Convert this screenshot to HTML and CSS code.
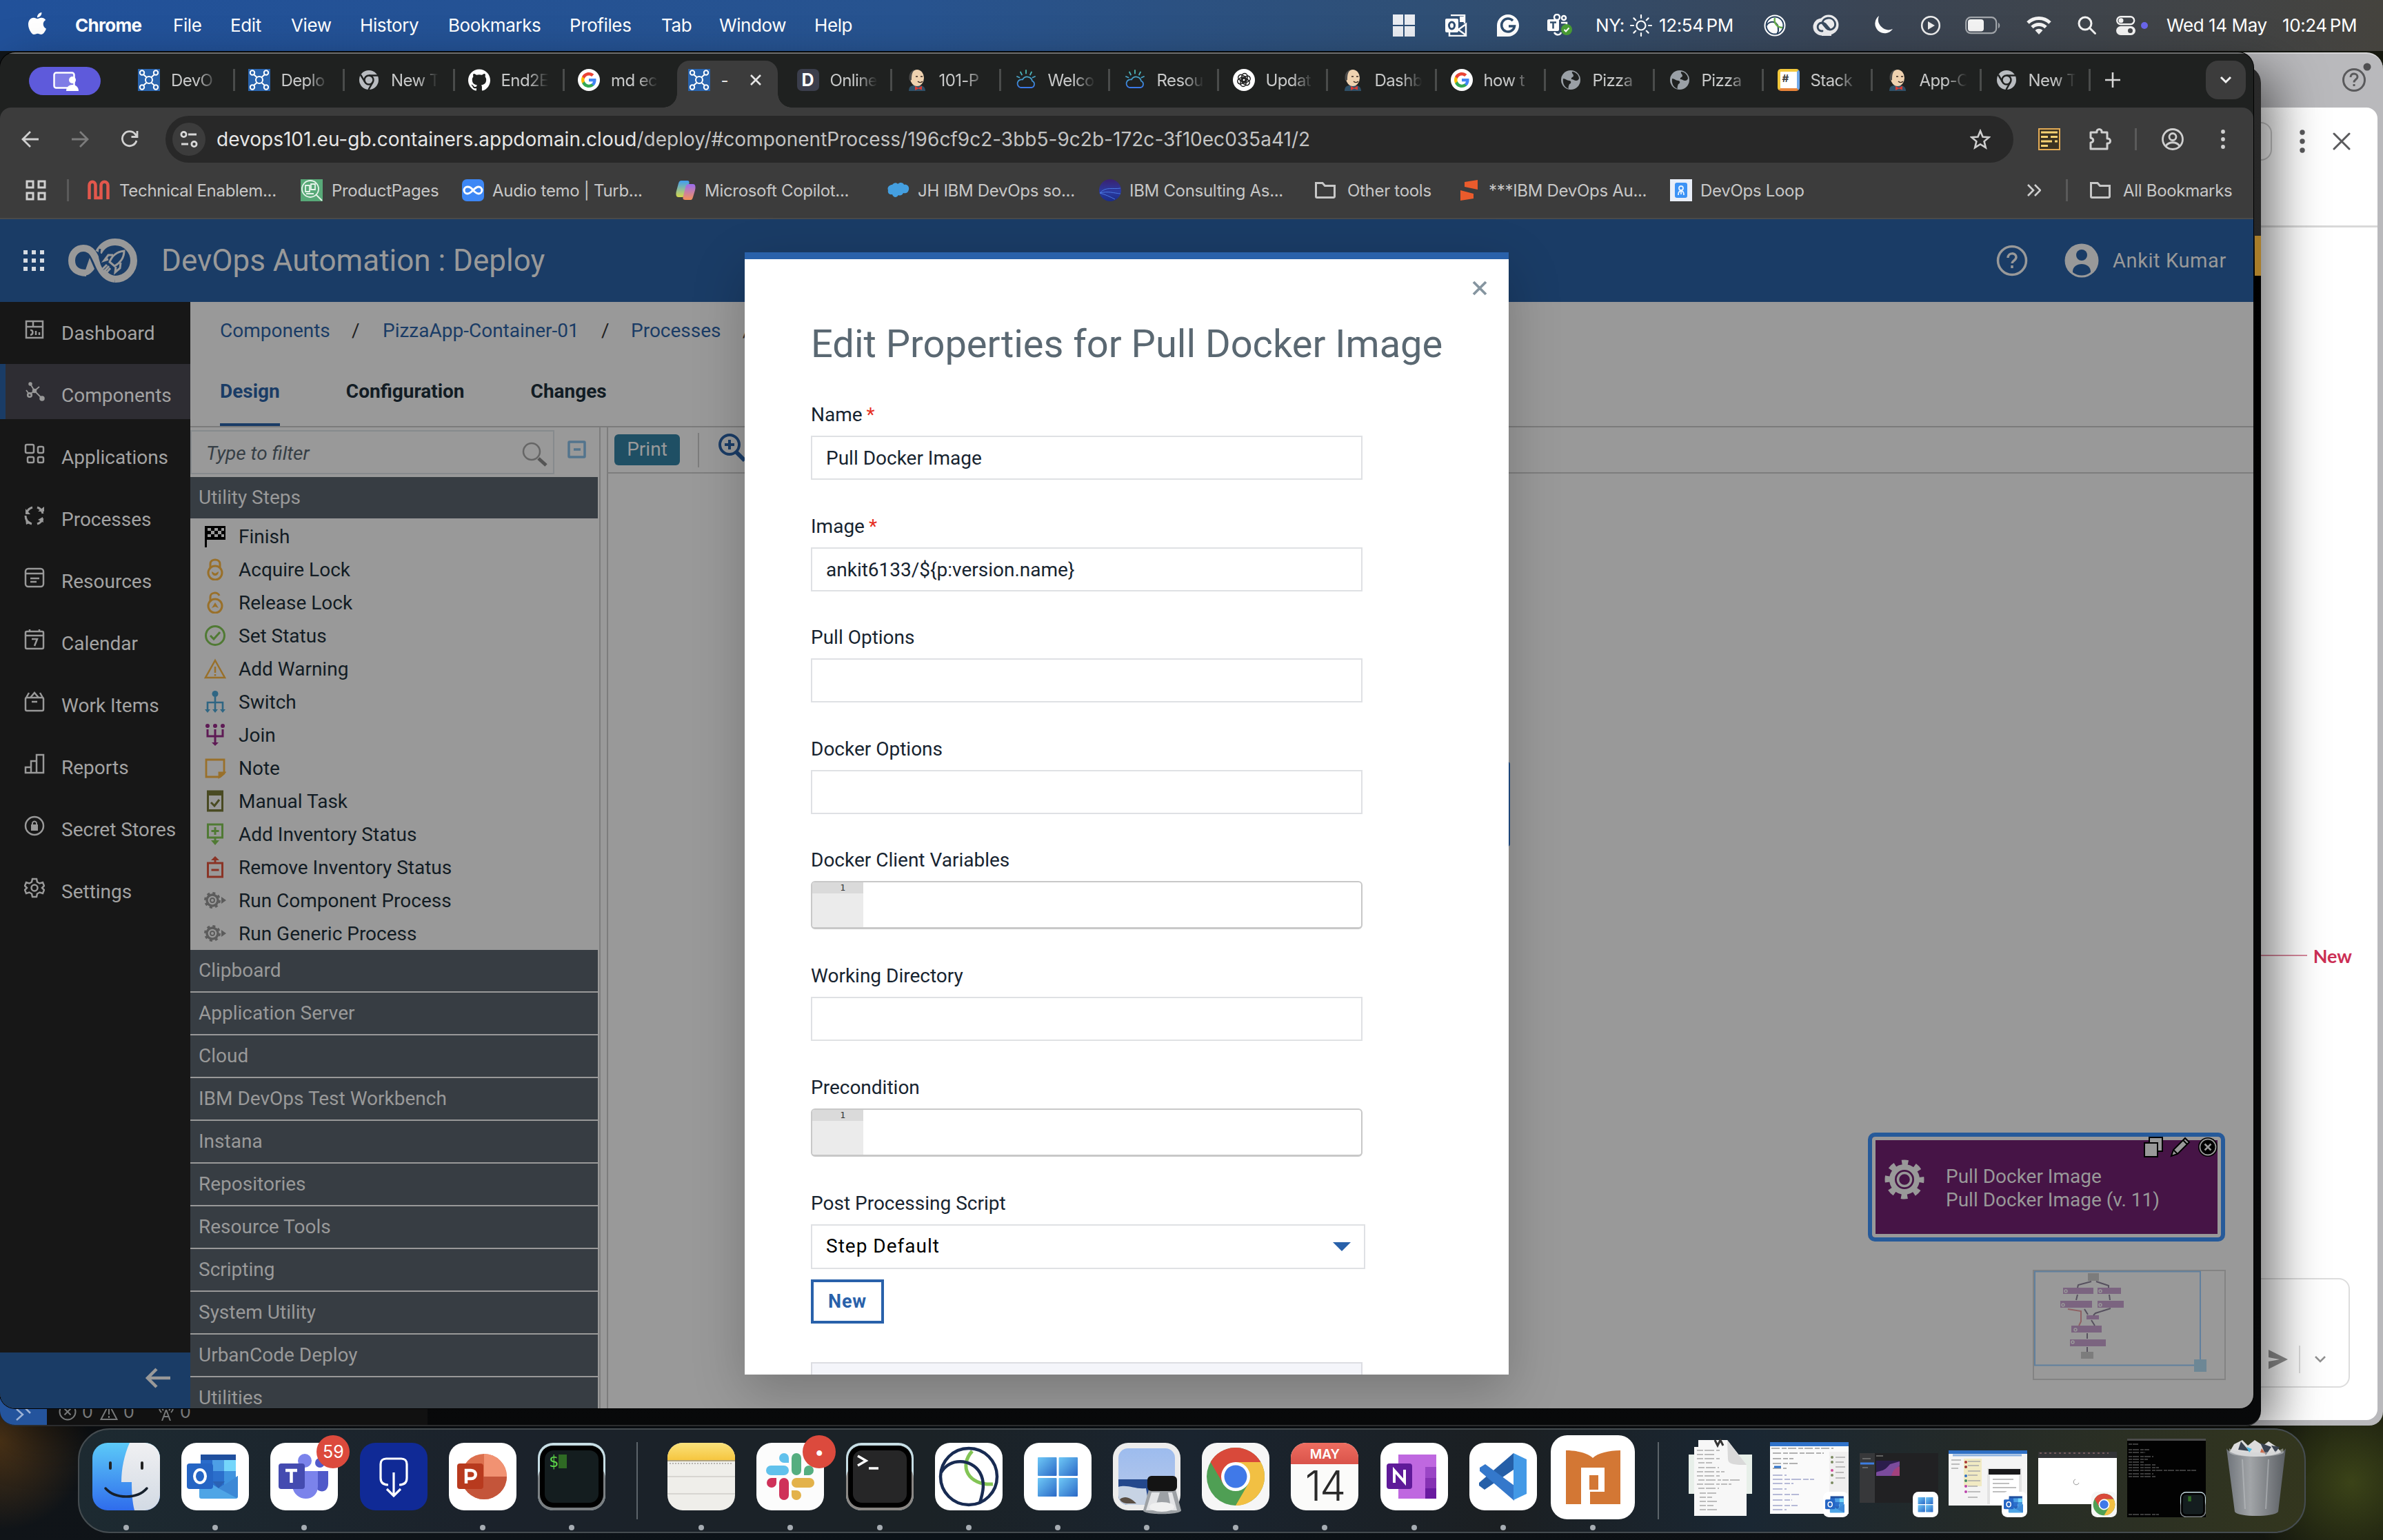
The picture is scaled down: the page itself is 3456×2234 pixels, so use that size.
FILE: index.html
```html
<!DOCTYPE html>
<html lang="en">
<head>
<meta charset="utf-8">
<title>DevOps Automation : Deploy</title>
<link rel="stylesheet" href="styles.css">
</head>
<body>
<svg class="defs" width="0" height="0" aria-hidden="true">
<defs>
<linearGradient id="gFinder" x1="0" y1="0" x2="0" y2="1"><stop offset="0" stop-color="#5ccaf8"/><stop offset="1" stop-color="#2f6cec"/></linearGradient>
<linearGradient id="gGrey" x1="0" y1="0" x2="0" y2="1"><stop offset="0" stop-color="#f0f0f2"/><stop offset="1" stop-color="#d2dae4"/></linearGradient>
<linearGradient id="gWin" x1="0" y1="0" x2="1" y2="1"><stop offset="0" stop-color="#6fc9f7"/><stop offset="1" stop-color="#2a68c6"/></linearGradient>
<linearGradient id="gSky" x1="0" y1="0" x2="0" y2="1"><stop offset="0" stop-color="#9dbcee"/><stop offset="1" stop-color="#b9c9ea"/></linearGradient>
<linearGradient id="gRed" x1="0" y1="0" x2="0" y2="1"><stop offset="0" stop-color="#ee6d60"/><stop offset="1" stop-color="#d9534a"/></linearGradient>
<linearGradient id="gYel" x1="0" y1="0" x2="0" y2="1"><stop offset="0" stop-color="#fae27c"/><stop offset="1" stop-color="#f6c63f"/></linearGradient>
<linearGradient id="gBin" x1="0" y1="0" x2="1" y2="0"><stop offset="0" stop-color="#6f747a"/><stop offset=".4" stop-color="#a2a5a8"/><stop offset="1" stop-color="#5a5e63"/></linearGradient>
<linearGradient id="gCloud" x1="0" y1="0" x2="0" y2="1"><stop offset="0" stop-color="#4fc0b0"/><stop offset="1" stop-color="#3a78e8"/></linearGradient>
<linearGradient id="gCop1" x1="0" y1="0" x2="0" y2="1"><stop offset="0" stop-color="#3f9df2"/><stop offset="1" stop-color="#d5d84a"/></linearGradient>
<linearGradient id="gCop2" x1="0" y1="0" x2="0" y2="1"><stop offset="0" stop-color="#9a6cf0"/><stop offset="1" stop-color="#f5925a"/></linearGradient>
<linearGradient id="gIbm" x1="0" y1="0" x2="0" y2="1"><stop offset="0" stop-color="#3a2170"/><stop offset=".55" stop-color="#2b3aa0"/><stop offset="1" stop-color="#1b2c86"/></linearGradient>
</defs>
<symbol id="apple" viewBox="0 0 24 24"><path d="M12.152 6.896c-.948 0-2.415-1.078-3.96-1.04-2.04.027-3.91 1.183-4.961 3.014-2.117 3.675-.546 9.103 1.519 12.09 1.013 1.454 2.208 3.09 3.792 3.039 1.52-.065 2.09-.987 3.935-.987 1.831 0 2.35.987 3.96.948 1.637-.026 2.676-1.48 3.676-2.948 1.156-1.688 1.636-3.325 1.662-3.415-.039-.013-3.182-1.221-3.22-4.857-.026-3.04 2.48-4.494 2.597-4.559-1.429-2.09-3.623-2.324-4.39-2.376-2-.156-3.675 1.09-4.61 1.09zM15.53 3.83c.843-1.012 1.4-2.427 1.245-3.83-1.207.052-2.662.805-3.532 1.818-.78.896-1.454 2.338-1.273 3.714 1.338.104 2.715-.688 3.559-1.701" fill="#fff"/></symbol>
<symbol id="deploy" viewBox="0 0 32 32"><path fill="#2a64ad" d="M0 0h32v32H0z"/><g fill="none" stroke="#fff" stroke-width="2"><circle cx="16" cy="16" r="5"/><circle cx="6" cy="5.500" r="3.200"/><circle cx="26" cy="5.500" r="3.200"/><circle cx="6" cy="26.500" r="3.200"/><circle cx="26" cy="26.500" r="3.200"/><path d="M8 8l5 4.500M24 8l-5 4.500M8 24l5-4.500M24 24l-5-4.500"/></g></symbol>
<symbol id="chromegrey" viewBox="0 0 32 32"><circle cx="16" cy="16" r="14" fill="#b9bcc0"/><circle cx="16" cy="16" r="6.500" fill="none" stroke="#1f2120" stroke-width="2.500"/><path d="M16 9.500h13M10.400 19.200L4 8.500M21.600 19.200L15.500 30" stroke="#1f2120" stroke-width="2.500"/></symbol>
<symbol id="github" viewBox="0 0 24 24"><path fill="#fff" d="M12 .297c-6.630 0-12 5.373-12 12 0 5.303 3.438 9.800 8.205 11.385.6.113.82-.258.82-.577 0-.285-.01-1.040-.015-2.040-3.338.724-4.042-1.610-4.042-1.610C4.422 18.070 3.633 17.700 3.633 17.700c-1.087-.744.084-.729.084-.729 1.205.084 1.838 1.236 1.838 1.236 1.070 1.835 2.809 1.305 3.495.998.108-.776.417-1.305.76-1.605-2.665-.3-5.466-1.332-5.466-5.930 0-1.310.465-2.380 1.235-3.220-.135-.303-.54-1.523.105-3.176 0 0 1.005-.322 3.300 1.230.96-.267 1.980-.399 3-.405 1.020.006 2.040.138 3 .405 2.280-1.552 3.285-1.230 3.285-1.230.645 1.653.24 2.873.12 3.176.765.84 1.230 1.910 1.230 3.220 0 4.610-2.805 5.625-5.475 5.920.42.36.81 1.096.81 2.220 0 1.606-.015 2.896-.015 3.286 0 .315.21.69.825.57C20.565 22.092 24 17.592 24 12.297c0-6.627-5.373-12-12-12"/></symbol>
<symbol id="google" viewBox="-4 -4 32 32"><circle cx="12" cy="12" r="16" fill="#fff"/><path fill="#4285F4" d="M22.560 12.250c0-.78-.07-1.530-.2-2.250H12v4.260h5.920c-.26 1.370-1.040 2.530-2.210 3.310v2.770h3.570c2.080-1.920 3.280-4.740 3.280-8.090z"/><path fill="#34A853" d="M12 23c2.970 0 5.460-.98 7.280-2.660l-3.570-2.770c-.98.66-2.230 1.060-3.710 1.060-2.860 0-5.290-1.930-6.160-4.530H2.180v2.840C3.990 20.530 7.700 23 12 23z"/><path fill="#FBBC05" d="M5.840 14.090c-.22-.66-.35-1.360-.35-2.090s.13-1.430.35-2.090V7.070H2.180C1.430 8.550 1 10.220 1 12s.43 3.450 1.180 4.930l2.850-2.220.81-.62z"/><path fill="#EA4335" d="M12 5.380c1.620 0 3.060.56 4.210 1.640l3.150-3.150C17.450 2.090 14.970 1 12 1 7.700 1 3.990 3.470 2.180 7.070l3.660 2.840c.87-2.600 3.300-4.530 6.160-4.530z"/></symbol>
<symbol id="jenkins" viewBox="0 0 32 32"><path d="M4 32c0-6 3-8 8-8h8c5 0 8 3 8 8z" fill="#2f5068"/><ellipse cx="16" cy="13" rx="10" ry="12" fill="#efd2b0"/><path d="M5 17C3 8 7 2 13 1c-4 3-5 7-5 15z" fill="#4a4a4a"/><path d="M17 18c2 2 5 2 7 0M14 11h3M21 11h3" stroke="#3a2a20" stroke-width="1.600" fill="none"/><path d="M13 25l5 2.500 5-3v6l-5-2-5 2.500z" fill="#d83b34"/></symbol>
<symbol id="cloudicon" viewBox="0 0 32 32"><g fill="none" stroke="url(#gCloud)" stroke-width="1.800" stroke-linecap="round"><path d="M8 27h16a5 5 0 0 0 1-9.500 7.500 7.500 0 0 0-14-2 5.800 5.800 0 0 0-3 11.500zM16 2v4.500M8 4.500l2 4M24 4.500l-2 4M3 11l3.500 1.500M29 11l-3.500 1.500"/></g></symbol>
<symbol id="openai" viewBox="0 0 32 32"><circle cx="16" cy="16" r="16" fill="#fff"/><g fill="none" stroke="#1c1c1c" stroke-width="1.500"><rect x="13" y="6.500" width="8" height="12" rx="4"/><rect x="13" y="6.500" width="8" height="12" rx="4" transform="rotate(60 16 16)"/><rect x="13" y="6.500" width="8" height="12" rx="4" transform="rotate(120 16 16)"/><rect x="13" y="6.500" width="8" height="12" rx="4" transform="rotate(180 16 16)"/><rect x="13" y="6.500" width="8" height="12" rx="4" transform="rotate(240 16 16)"/><rect x="13" y="6.500" width="8" height="12" rx="4" transform="rotate(300 16 16)"/></g></symbol>
<symbol id="globe" viewBox="0 0 32 32"><circle cx="16" cy="16" r="14" fill="#9aa0a6"/><path d="M5 14c4 0 5 3 9 3 3 0 3 4 0 5-1 3-2 5-1 7C7 27 4 21 5 14zM18 4c-1 3 2 3 2 6 0 2-4 2-3 5 3 0 4 2 7 2 2 0 3-1 4-3 0-5-5-10-10-10z" fill="#1f2120"/></symbol>
<symbol id="folder" viewBox="0 0 32 32"><path d="M2.500 6.500h9.500l3.500 4h14v15.500a1.500 1.500 0 0 1-1.500 1.500H4a1.500 1.500 0 0 1-1.500-1.500z" fill="none" stroke="#c7c7c7" stroke-width="3" transform="translate(0 -1)"/></symbol>
<symbol id="gearrun" viewBox="0 0 32 32"><g fill="none" stroke="#5c5c5c"><circle cx="12" cy="16" r="8" stroke-width="3.500"/><circle cx="12" cy="16" r="10.500" stroke-width="3" stroke-dasharray="4 4.250"/><circle cx="12" cy="16" r="3" stroke-width="2"/></g><path d="M25 11l7 5-7 5z" fill="#5c5c5c"/></symbol>
<symbol id="outlook" viewBox="0 0 98 98"><rect width="98" height="98" rx="22" fill="#fff"/><path d="M28 17h51v30H28z" fill="#1f4f9e"/><path d="M28 25h17v16H28z" fill="#2a6ccb"/><path d="M45 25h17v16H45z" fill="#4d9fe6"/><path d="M62 25h17v16H62z" fill="#74d6fb"/><path d="M28 41h34v28H28z" fill="#2b6fcc"/><path d="M62 41h17v22H62z" fill="#3f93df"/><path d="M26 48l28 18 28-18v30a3 3 0 0 1-3 3H29a3 3 0 0 1-3-3z" fill="#4ea5e6"/><path d="M45 56h18l-9 10z" fill="#2a62b4"/><path d="M54 66l28-18v30a3 3 0 0 1-2 2z" fill="#3c88d6"/><rect x="8" y="30" width="38" height="37" rx="4" fill="#2565c4"/><ellipse cx="27" cy="48.500" rx="8" ry="9.500" fill="none" stroke="#fff" stroke-width="4"/></symbol>
<symbol id="wintile" viewBox="0 0 98 98"><rect width="98" height="98" rx="22" fill="#fff"/><g fill="url(#gWin)"><rect x="20" y="21" width="27.500" height="27" rx="1"/><rect x="50.500" y="21" width="27.500" height="27" rx="1"/><rect x="20" y="51" width="27.500" height="27" rx="1"/><rect x="50.500" y="51" width="27.500" height="27" rx="1"/></g></symbol>
<symbol id="chromeapp" viewBox="0 0 98 98"><rect width="98" height="98" rx="22" fill="#f6f6f6"/><circle cx="49" cy="49" r="42" fill="#4f9f54"/><path d="M49 28h36.400A42 42 0 0 1 49 91l18-31z" fill="#f2c043"/><path d="M12.600 28A42 42 0 0 1 85.400 28H49L31 59.500z" fill="#d9493a"/><circle cx="49" cy="49" r="21" fill="#fff"/><circle cx="49" cy="49" r="16.500" fill="#4079e8"/></symbol>
<symbol id="termapp" viewBox="0 0 98 98"><rect width="98" height="98" rx="22" fill="#c6dde4"/><rect y="30" width="98" height="68" rx="22" fill="#7a7f82"/><rect x="3" y="4" width="92" height="90" rx="19" fill="#000"/><rect x="10" y="11" width="78" height="76" rx="13" fill="#141d1f"/><rect x="30" y="17" width="12" height="20" fill="#2f6a24"/></symbol>
</svg>

<header class="menubar">
  <svg class="apple"><use href="#apple"/></svg>
  <b>Chrome</b><span>File</span><span>Edit</span><span>View</span><span>History</span><span>Bookmarks</span><span>Profiles</span><span>Tab</span><span>Window</span><span>Help</span>
  <svg width="32" height="32" viewBox="0 0 32 32" fill="#e9ecf2"><path d="M0 0h15v15H0zM17 0h15v15H17zM0 17h15v15H0zM17 17h15v15H17z"/></svg>
  <svg width="32" height="32" viewBox="0 0 32 32"><path d="M8 1h20v12M6 26v5h24V14l-11 8 11 8M19 22l-5-3" fill="none" stroke="#fff" stroke-width="2.500"/><path d="M21 3v8h7V3z" fill="#fff"/><rect y="6" width="19" height="20" rx="2" fill="#fff"/><ellipse cx="9.500" cy="16" rx="4" ry="5" fill="none" stroke="#2f4d72" stroke-width="3"/></svg>
  <svg width="32" height="32" viewBox="0 0 32 32"><path d="M16 0a16 16 0 1 1 0 32H0V16A16 16 0 0 1 16 0z" fill="#fff"/><path d="M23 9a9.500 9.500 0 1 0 2.500 8H17" fill="none" stroke="#2f4d6e" stroke-width="3.500"/></svg>
  <svg width="36" height="34" viewBox="0 0 36 34"><rect y="8" width="17" height="17" rx="2" fill="#fff"/><path d="M4 12.500h9M8.500 12.500v9" stroke="#33506e" stroke-width="2.500"/><g fill="none" stroke="#fff" stroke-width="2.500"><circle cx="14" cy="5" r="4"/><circle cx="24" cy="6" r="3"/><path d="M20 13h8v5M10 27c3 5 9 4 10 0"/></g><circle cx="28" cy="23" r="8" fill="#4a9e35"/><path d="M24.500 23l2.500 2.500 4.500-5" stroke="#fff" stroke-width="2" fill="none"/></svg>
  <span>NY:</span>
  <svg width="32" height="32" viewBox="0 0 32 32" fill="none" stroke="#fff" stroke-width="2.200" stroke-linecap="round"><circle cx="16" cy="16" r="6.500"/><path d="M16 1v4M16 27v4M1 16h4M27 16h4M5.400 5.400l2.800 2.800M23.800 23.800l2.800 2.800M5.400 26.600l2.800-2.800M23.800 8.200l2.800-2.800"/></svg>
  <span>12:54<small></small>PM</span>
  <svg width="32" height="32" viewBox="0 0 32 32"><circle cx="16" cy="16" r="15.500" fill="#fff"/><g fill="none" stroke="#26405e" stroke-width="2"><circle cx="16" cy="16" r="12.500"/><path d="M4 16c4-8 18-8 17 8l-2 5"/></g><path d="M16 5c-2 8 4 14 11 14" fill="none" stroke="#6ab04c" stroke-width="2.500"/></svg>
  <svg width="38" height="32" viewBox="0 0 38 32"><circle cx="13" cy="18" r="12.500" fill="#ececee"/><circle cx="23" cy="15" r="14.500" fill="#ececee"/><path d="M13 28h14v3H13z" fill="#ececee"/><g fill="none" stroke="#394a5e" stroke-width="2.800" stroke-linecap="round"><path d="M14 24c-9 1-9-12-1-12 3 0 5 1 7 4l5 6M14 13c0-9 14-11 18-2 3 9-7 14-12 9l-5-6"/></g></svg>
  <svg width="30" height="30" viewBox="0 0 30 30"><path d="M9 1a14 14 0 1 0 20 19A15 15 0 0 1 9 1z" fill="#fff"/></svg>
  <svg width="30" height="30" viewBox="0 0 30 30"><circle cx="15" cy="15" r="12.800" fill="none" stroke="#ececec" stroke-width="2.600"/><path d="M11 9l10 6-10 6z" fill="#ececec"/></svg>
  <svg width="52" height="26" viewBox="0 0 52 26"><rect x="1.200" y="1.200" width="44" height="23" rx="7" fill="none" stroke="#a4a8ad" stroke-width="2.200"/><rect x="4" y="4" width="23" height="17.500" rx="4" fill="#f3f3f3"/><path d="M48 9c3 1 3 7 0 8z" fill="#a4a8ad"/></svg>
  <svg width="36" height="26" viewBox="0 0 36 26" fill="none" stroke="#f3f3f3" stroke-width="5"><path d="M2 9a23 23 0 0 1 32 0M8 15.500a14.500 14.500 0 0 1 20 0"/><path d="M18 26l-5.500-6a8 8 0 0 1 11 0z" fill="#f3f3f3" stroke="none"/></svg>
  <svg width="28" height="28" viewBox="0 0 28 28" fill="none" stroke="#f3f3f3" stroke-width="3"><circle cx="11" cy="11" r="9"/><path d="M17.500 17.500l8 8" stroke-linecap="round"/></svg>
  <svg width="28" height="28" viewBox="0 0 28 28"><rect x="1.200" y="1.200" width="25" height="11" rx="5.500" fill="none" stroke="#f3f3f3" stroke-width="2.400"/><circle cx="7" cy="6.700" r="3.500" fill="#f3f3f3"/><rect y="15" width="28" height="13" rx="6.500" fill="#f3f3f3"/><circle cx="20.500" cy="21.500" r="3.500" fill="#44464a"/></svg>
  <i class="statusdot"></i>
  <span>Wed 14 May</span><span>10:24<small></small>PM</span>
</header>

<section class="win-slack">
  <div class="slack-top"><svg width="44" height="44" viewBox="0 0 44 44"><circle cx="18" cy="26" r="15.500" fill="none" stroke="#5a5a5c" stroke-width="3"/><path d="M13 22c0-7 10-6 10-.5 0 4-5 3.500-5 8M18 32v3" fill="none" stroke="#5a5a5c" stroke-width="3"/><circle cx="37" cy="7" r="5.500" fill="#4f4f51"/></svg></div>
  <div class="slack-body">
    <div class="slack-bar"><i class="pillend"></i><svg width="10" height="34" viewBox="0 0 10 34" fill="#5a5a5c"><circle cx="5" cy="4" r="3.700"/><circle cx="5" cy="17" r="3.700"/><circle cx="5" cy="30" r="3.700"/></svg><svg width="26" height="26" viewBox="0 0 26 26" stroke="#5a5a5c" stroke-width="3" stroke-linecap="round"><path d="M2 2l22 22M24 2L2 24"/></svg></div>
    <div class="newline"><i></i><b>New</b></div>
    <div class="composer"><svg width="30" height="28" viewBox="0 0 30 28"><path d="M1 0l28 14L1 28V17l16-3L1 11z" fill="#919191"/></svg><i></i><svg width="18" height="12" viewBox="0 0 18 12" fill="none" stroke="#919191" stroke-width="2.500"><path d="M2 2l7 7 7-7"/></svg></div>
  </div>
</section>

<section class="win-code">
  <i class="code-accent"></i>
  <div class="status">
    <span class="remote"><svg width="26" height="28" viewBox="0 0 26 28" fill="none" stroke="#9db3d6" stroke-width="2.500"><path d="M3 10l9 8-9 8M23 0l-8 8 8 8"/></svg></span>
    <svg width="26" height="26" viewBox="0 0 26 26" fill="none" stroke="#77797a" stroke-width="2"><circle cx="13" cy="13" r="11.500"/><path d="M8.500 8.500l9 9M17.500 8.500l-9 9"/></svg><span>0</span>
    <svg width="26" height="26" viewBox="0 0 26 26" fill="none" stroke="#77797a" stroke-width="2"><path d="M13 2l11.500 22H1.500zM13 9v8M13 19v3"/></svg><span>0</span>
    <svg class="tower" width="24" height="26" viewBox="0 0 24 26" fill="none" stroke="#77797a" stroke-width="2"><path d="M12 10L6 26M12 10l6 16M8 20h8M5 2c-4 4-4 8 0 12M19 2c4 4 4 8 0 12M8 5c-2 2-2 4 0 6M16 5c2 2 2 4 0 6"/></svg><span>0</span>
  </div>
</section>

<main class="win-chrome">
  <div class="tabstrip">
    <span class="pill"><svg width="38" height="28" viewBox="0 0 38 28"><rect x="1.500" y="1.500" width="29" height="22" rx="3" fill="#7f7ce6" stroke="#fff" stroke-width="2.500"/><circle cx="28" cy="12" r="5" fill="#fff"/><path d="M19 28c0-12 18-12 18 0z" fill="#fff"/></svg></span>
    <div class="tabs-a">
      <div class="tab"><svg><use href="#deploy"/></svg><span>DevO</span></div>
      <div class="tab"><svg><use href="#deploy"/></svg><span>Deplo</span></div>
      <div class="tab"><svg><use href="#chromegrey"/></svg><span>New T</span></div>
      <div class="tab"><svg><use href="#github"/></svg><span>End2E</span></div>
      <div class="tab last"><svg><use href="#google"/></svg><span>md ec</span></div>
    </div>
    <div class="tab-active"><svg><use href="#deploy"/></svg><span>-</span><svg class="tx" viewBox="0 0 16 16" stroke="#e6e6e6" stroke-width="2.600"><path d="M1 1l14 14M15 1L1 15"/></svg></div>
    <div class="tabs-b">
      <div class="tab"><b class="fav-d">D</b><span>Online</span></div>
      <div class="tab"><svg><use href="#jenkins"/></svg><span>101-P</span></div>
      <div class="tab"><svg><use href="#cloudicon"/></svg><span>Welco</span></div>
      <div class="tab"><svg><use href="#cloudicon"/></svg><span>Resou</span></div>
      <div class="tab"><svg><use href="#openai"/></svg><span>Updat</span></div>
      <div class="tab"><svg><use href="#jenkins"/></svg><span>Dashb</span></div>
      <div class="tab"><svg><use href="#google"/></svg><span>how t</span></div>
      <div class="tab"><svg><use href="#globe"/></svg><span>Pizza</span></div>
      <div class="tab"><svg><use href="#globe"/></svg><span>Pizza</span></div>
      <div class="tab"><b class="fav-s">#</b><span>Stack</span></div>
      <div class="tab"><svg><use href="#jenkins"/></svg><span>App-C</span></div>
      <div class="tab"><svg><use href="#chromegrey"/></svg><span>New T</span></div>
    </div>
    <svg class="plus" width="22" height="22" viewBox="0 0 22 22" stroke="#d8d8d8" stroke-width="2.600"><path d="M11 0v22M0 11h22"/></svg>
    <span class="tabdrop"><svg width="18" height="12" viewBox="0 0 18 12" fill="none" stroke="#f0f0f0" stroke-width="3"><path d="M2 2l7 7 7-7"/></svg></span>
  </div>

  <div class="toolbar">
    <svg width="26" height="26" viewBox="0 0 26 26" fill="none" stroke="#d0d0d0" stroke-width="2.800"><path d="M25 13H3M13 2L2 13l11 11"/></svg>
    <svg width="26" height="26" viewBox="0 0 26 26" fill="none" stroke="#7c7c7c" stroke-width="2.800"><path d="M1 13h22M13 2l11 11-11 11"/></svg>
    <svg width="26" height="26" viewBox="0 0 26 26" fill="none" stroke="#d0d0d0" stroke-width="2.800"><path d="M23 15a10.500 10.500 0 1 1-2-9.500L24 9"/><path d="M24 1v8.500h-8.500"/></svg>
    <div class="omnibox">
      <span class="site"><svg width="26" height="24" viewBox="0 0 26 24" fill="none" stroke="#d8d8d8" stroke-width="2.800"><circle cx="5.500" cy="5" r="3.600"/><path d="M12 5h12M2 19h10"/><circle cx="20.500" cy="19" r="3.600"/></svg></span>
      <span class="url">devops101.eu-gb.containers.appdomain.cloud<em>/deploy/#componentProcess/196cf9c2-3bb5-9c2b-172c-3f10ec035a41/2</em></span>
      <svg width="30" height="30" viewBox="0 0 30 30" fill="none" stroke="#cfcfcf" stroke-width="2.600"><path d="M15 3l3.500 8.500 9 .7-6.900 5.900 2.200 9-7.800-4.900-7.800 4.900 2.200-9L2.500 12.200l9-.7z"/></svg>
    </div>
    <svg width="32" height="32" viewBox="0 0 32 32"><rect x="1" y="1" width="30" height="30" fill="#3a3222" stroke="#e3ab55" stroke-width="2"/><path d="M4 6h24M4 12.500h10M18 12.500h10M4 19h16M24 19h4M4 25.500h10" stroke="#f5d273" stroke-width="3"/></svg>
    <svg width="34" height="34" viewBox="0 0 34 34"><path d="M3 7h9c-1-6 8-6 7 0h8v9c6-1 6 8 0 7v8H3v-9c5-1 5-6 0-7z" fill="none" stroke="#cfcfcf" stroke-width="3" stroke-linejoin="round"/></svg>
    <i class="vsep"></i>
    <svg width="32" height="32" viewBox="0 0 32 32" fill="none" stroke="#cfcfcf" stroke-width="2.800"><circle cx="16" cy="16" r="14.500"/><circle cx="16" cy="12.500" r="5"/><path d="M6 26c4-7 16-7 20 0"/></svg>
    <svg width="6" height="28" viewBox="0 0 6 28" fill="#cfcfcf"><circle cx="3" cy="3" r="2.900"/><circle cx="3" cy="14" r="2.900"/><circle cx="3" cy="25" r="2.900"/></svg>
  </div>

  <nav class="bookmarks">
    <svg width="30" height="30" viewBox="0 0 30 30" fill="none" stroke="#cfcfcf" stroke-width="3"><path d="M2 2h9v9H2zM19 2h9v9h-9zM2 19h9v9H2zM19 19h9v9h-9z"/></svg>
    <i class="vsep"></i>
    <svg width="32" height="32" viewBox="0 0 32 32" fill="none" stroke="#e2574c" stroke-width="4.500"><path d="M2.500 29V9c0-7 9-7 9 0v18h8V9c0-7 10-7 10 0v20"/></svg><span>Technical Enablem...</span>
    <svg width="32" height="32" viewBox="0 0 32 32"><path fill="#58a978" d="M0 0h32v32H0z"/><circle cx="14" cy="14" r="12" fill="none" stroke="#e5f3ea" stroke-width="1.800"/><path d="M7 9h6v9H7zM15 7h6v8h-6zM8 21h11M22 22l9 9" fill="none" stroke="#e5f3ea" stroke-width="1.800"/></svg><span>ProductPages</span>
    <svg width="32" height="32" viewBox="0 0 32 32"><rect width="32" height="32" rx="7" fill="#3d87f5"/><path d="M16 16c-3-5-6-5-8-5a5 5 0 0 0 0 10c3 0 5-2 8-5s5-5 8-5a5 5 0 0 1 0 10c-3 0-5-2-8-5z" fill="none" stroke="#fff" stroke-width="3"/></svg><span>Audio temo | Turb...</span>
    <svg width="32" height="32" viewBox="0 0 32 32"><path d="M9 2h9c3 0 3 3 2 6l-4 14c-1 3-3 4-6 4H5c-4 0-4-5-3-9L5 6c1-3 2-4 4-4z" fill="url(#gCop1)"/><path d="M23 30h-8c-4 0-4-3-3-6l3-12c1-4 3-5 6-5h5c4 0 4 5 3 9l-3 10c-1 3-2 4-3 4z" fill="url(#gCop2)"/></svg><span>Microsoft Copilot...</span>
    <svg width="32" height="32" viewBox="0 0 32 32"><path d="M7 8c3-4 7-3 8-1 4-4 9-1 9 1 5-1 8 3 7 7-1 5-5 6-8 5-2 4-5 4-7 3-3 5-8 3-9-1-5 1-7-3-6-6C-1 12 3 8 7 8z" fill="#449fe0"/></svg><span>JH IBM DevOps so...</span>
    <svg width="32" height="32" viewBox="0 0 32 32"><circle cx="16" cy="16" r="16" fill="url(#gIbm)"/><path d="M1 20C10 10 20 15 31 13M1 20c12-3 20 0 30 1M1 20c8 2 16 6 22 9" stroke="#4a78e0" stroke-width="1" fill="none"/></svg><span>IBM Consulting As...</span>
    <svg width="32" height="32"><use href="#folder"/></svg><span>Other tools</span>
    <svg width="32" height="32" viewBox="0 0 32 32" fill="#ea5b2c"><path d="M7 4l19-3v14L7 11zM1 16l19 5v7L1 31z"/></svg><span>***IBM DevOps Au...</span>
    <svg width="32" height="32" viewBox="0 0 32 32"><path fill="#e9eef8" d="M0 0h32v32H0z"/><rect x="7" y="5" width="18" height="22" rx="3" fill="#3c92f5"/><path d="M12 23c0-8 8-8 8 0M16 10a3 3 0 1 1 0 6 3 3 0 0 1 0-6zM16 16v6" fill="none" stroke="#e9f3fe" stroke-width="1.800"/></svg><span>DevOps Loop</span>
    <svg width="20" height="18" viewBox="0 0 20 18" fill="none" stroke="#cfcfcf" stroke-width="2.600"><path d="M1 1l8 8-8 8M11 1l8 8-8 8"/></svg>
    <i class="vsep"></i>
    <svg width="32" height="32"><use href="#folder"/></svg><span>All Bookmarks</span>
  </nav>

  <div class="app">
    <div class="apphead">
      <svg width="30" height="30" viewBox="0 0 30 30" fill="#d6dbe2"><path d="M0 0h6v6H0zM12 0h6v6h-6zM24 0h6v6h-6zM0 12h6v6H0zM12 12h6v6h-6zM24 12h6v6h-6zM0 24h6v6H0zM12 24h6v6h-6zM24 24h6v6h-6z"/></svg>
      <svg class="logo" width="100" height="64" viewBox="0 0 100 64"><g fill="none" stroke="#999" stroke-width="10"><path d="M26 50C12 50 5 43 5 32s8-18 17-18c12 0 16 10 22 24 5 12 12 20 24 21"/><path d="M44 20C49 10 58 5 68 5a27 27 0 0 1 0 54"/></g><path d="M22 54l9-26 7 16c-4 6-9 10-16 10z" fill="#999"/><path d="M46 15c-2 8 0 20 6 30" stroke="#1a3c66" stroke-width="3" fill="none"/><g fill="none" stroke="#999" stroke-width="3"><path d="M60 34c3-8 10-15 21-16 0 10-6 18-14 22zM58 30l-6 2 6-8 7 0M69 41l-1 8 7-6 1-8M56 38l-8 8M61 43l-7 8M59 40l-8 9"/></g></svg>
      <h1>DevOps Automation : Deploy</h1>
      <svg width="46" height="46" viewBox="0 0 46 46" fill="none" stroke="#999" stroke-width="3.500"><circle cx="23" cy="23" r="20.500"/><path d="M17 19c0-8 12-8 12-1 0 5-6 5-6 9M23 30v4"/></svg>
      <svg width="50" height="50" viewBox="0 0 50 50"><circle cx="25" cy="25" r="24.500" fill="#999"/><circle cx="25" cy="17" r="8" fill="#1a3c66"/><path d="M12 42c-1-16 27-16 26 0-8 6-18 6-26 0z" fill="#1a3c66"/></svg>
      <span class="user">Ankit Kumar</span>
    </div>
    <div class="appbody">
      <aside class="side">
        <a><svg viewBox="0 0 30 30"><path d="M3 3h24v24H3zM3 11h24M13 3v8M9 16c4-1 5 6 0 7M17 17v6M22 19v4"/></svg><span>Dashboard</span></a>
        <a class="on"><svg viewBox="0 0 30 30"><path d="M15 14L9 4M15 14l7-6M15 14L8 19M15 14l10 10M3 13l3 4" stroke-width="1.800"/><circle cx="9" cy="4" r="1.500"/><circle cx="8" cy="20" r="2.800"/><circle cx="15" cy="14" r="2" fill="#999"/><circle cx="26" cy="25" r="2.500" fill="#999"/></svg><span>Components</span></a>
        <a><svg viewBox="0 0 30 30"><rect x="2" y="2" width="12" height="12" rx="2"/><rect x="20" y="5" width="8" height="9" rx="2"/><rect x="5" y="20" width="9" height="8" rx="2"/><rect x="20" y="20" width="8" height="8" rx="2"/></svg><span>Applications</span></a>
        <a><svg viewBox="0 0 30 30"><path d="M4 10a12 12 0 0 1 8-7M19 3a12 12 0 0 1 8 9M27 19a12 12 0 0 1-8 8M11 27a12 12 0 0 1-9-12" stroke-width="3"/><path d="M2 5v8h7zM20 9h9V2zM28 25l-1-8-7 4zM2 20l1 8 7-3z" fill="#999" stroke="none"/></svg><span>Processes</span></a>
        <a><svg viewBox="0 0 30 30"><rect x="2" y="2" width="26" height="26" rx="4"/><path d="M2 9h26M9 16h13M9 21h9"/></svg><span>Resources</span></a>
        <a><svg viewBox="0 0 30 30"><rect x="2" y="3" width="26" height="25" rx="2"/><path d="M2 9h26M8 0v4M22 0v4M11 14h8l-4 10"/></svg><span>Calendar</span></a>
        <a><svg viewBox="0 0 30 30"><rect x="2" y="9" width="26" height="19" rx="2"/><path d="M3 9l4-7M27 9l-4-7M9 9l6-7 6 7M11 15h8"/></svg><span>Work Items</span></a>
        <a><svg viewBox="0 0 30 30"><path d="M2 28v-8h8v8zM10 28V11h8v17zM18 28V2h10v26z"/></svg><span>Reports</span></a>
        <a><svg viewBox="0 0 30 30"><circle cx="15" cy="15" r="13"/><rect x="10" y="13" width="10" height="9" fill="#999" stroke="none"/><path d="M12 13c-1-6 7-6 6 0" stroke-width="2"/></svg><span>Secret Stores</span></a>
        <a><svg viewBox="0 0 30 30"><path d="M12 2h6l1 4.500 3.500 2 4.500-1.500 2 5-3 3 3 3-2 5-4.500-1.500-3.500 2-1 4.500h-6l-1-4.500-3.500-2L3 23l-2-5 3-3-3-3 2-5 4.500 1.500 3.500-2z"/><circle cx="15" cy="15" r="4.500"/></svg><span>Settings</span></a>
        <div class="sidefoot"><svg width="38" height="30" viewBox="0 0 38 30" fill="none" stroke="#999" stroke-width="4.500"><path d="M37 15H5M17 2L4 15l13 13"/></svg></div>
      </aside>
      <div class="content">
        <div class="crumbs"><a>Components</a><i>/</i><a>PizzaApp-Container-01</a><i>/</i><a>Processes</a><i>/</i></div>
        <div class="subtabs"><b class="on">Design</b><b>Configuration</b><b>Changes</b></div>
        <div class="work">
          <div class="palette">
            <div class="filter"><div class="fbox"><em>Type to filter</em><svg width="38" height="38" viewBox="0 0 38 38" fill="none"><circle cx="14" cy="14" r="12" stroke="#666" stroke-width="2.500"/><path d="M24 24l11 10" stroke="#555" stroke-width="5"/></svg></div><svg width="28" height="28" viewBox="0 0 28 28" fill="none" stroke="#53748d" stroke-width="3.500"><rect x="2" y="3" width="23" height="22" rx="1"/><path d="M9 14h10"/></svg></div>
            <div class="cat">Utility Steps</div>
            <ul>
              <li><svg viewBox="0 0 32 32"><path d="M1 1h30v20H4v11H1z" fill="#000"/><path d="M5 4h5v4H5zM15 4h5v4h-5zM25 4h4v4h-4zM10 8h5v5h-5zM20 8h5v5h-5zM5 13h5v4H5zM15 13h5v4h-5zM25 13h4v4h-4z" fill="#999"/></svg>Finish</li>
              <li><svg viewBox="0 0 32 32" fill="none" stroke="#99702a" stroke-width="3"><circle cx="16" cy="21" r="10"/><path d="M9 14V8c0-8 14-8 14 0v6"/><path d="M11 19l5 3 5-3c0 8-10 8-10 0z" fill="#99702a" stroke="none"/></svg>Acquire Lock</li>
              <li><svg viewBox="0 0 32 32" fill="none" stroke="#99702a" stroke-width="3"><circle cx="16" cy="21" r="10"/><path d="M9 15V8c0-7 11-8 13-2"/><path d="M11 24l5-8 5 8-5-2z" fill="#99702a" stroke="none"/></svg>Release Lock</li>
              <li><svg viewBox="0 0 32 32" fill="none" stroke="#507a34" stroke-width="3"><circle cx="16" cy="16" r="13.500"/><path d="M9 16l5 5 9-10"/></svg>Set Status</li>
              <li><svg viewBox="0 0 32 32" fill="none" stroke="#99702a" stroke-width="2.500"><path d="M16 4l14 25H2zM16 13v9M16 24v2.500"/></svg>Add Warning</li>
              <li><svg viewBox="0 0 32 32" fill="none" stroke="#2f6683" stroke-width="2.600"><circle cx="16" cy="4.500" r="4.500" fill="#2f6683" stroke="none"/><path d="M16 9v20M5 28V17h22v11"/><path d="M1 27h8l-4 5zM12 27h8l-4 5zM23 27h8l-4 5z" fill="#2f6683" stroke="none"/></svg>Switch</li>
              <li><svg viewBox="0 0 32 32" fill="none" stroke="#5e1a55" stroke-width="3"><path d="M16 8v20M5 8v10h22V8"/><g fill="#5e1a55" stroke="none"><circle cx="5" cy="3" r="3"/><circle cx="16" cy="3" r="3"/><circle cx="27" cy="3" r="3"/><path d="M11 27h10l-5 5z"/></g></svg>Join</li>
              <li><svg viewBox="0 0 32 32" fill="none" stroke="#99702a" stroke-width="2.800"><path d="M3 4h26v20l-6 5H3z"/><path d="M22 29v-6h7z" fill="#99702a"/></svg>Note</li>
              <li><svg viewBox="0 0 32 32" fill="none" stroke="#494a22" stroke-width="3"><path d="M5.500 2h21v28h-21z"/><path d="M5 2h22v6H5zM5 28h22v3H5z" fill="#494a22" stroke="none"/><path d="M10 18l5 5 7-9"/></svg>Manual Task</li>
              <li><svg viewBox="0 0 32 32" fill="none" stroke="#507a34" stroke-width="3"><path d="M5.500 2h21v19h-21zM16 6v11M10.500 11.500h11M16 21v6"/><path d="M10 25h12l-6 7z" fill="#507a34" stroke="none"/></svg>Add Inventory Status</li>
              <li><svg viewBox="0 0 32 32" fill="none" stroke="#8a3426" stroke-width="3"><path d="M5.500 10h21v20h-21zM10.500 20h11M16 10V4"/><path d="M10 6h12l-6-6z" fill="#8a3426" stroke="none"/></svg>Remove Inventory Status</li>
              <li><svg><use href="#gearrun"/></svg>Run Component Process</li>
              <li><svg><use href="#gearrun"/></svg>Run Generic Process</li>
            </ul>
            <div class="cats"><div class="cat">Clipboard</div><div class="cat">Application Server</div><div class="cat">Cloud</div><div class="cat">IBM DevOps Test Workbench</div><div class="cat">Instana</div><div class="cat">Repositories</div><div class="cat">Resource Tools</div><div class="cat">Scripting</div><div class="cat">System Utility</div><div class="cat">UrbanCode Deploy</div><div class="cat">Utilities</div></div>
          </div>
          <div class="canvas">
            <div class="ctools"><button>Print</button><i></i><svg width="44" height="44" viewBox="0 0 44 44" fill="none" stroke="#1a3c66" stroke-width="4"><circle cx="17" cy="17" r="14"/><path d="M17 10v14M10 17h14"/><path d="M27 28l12 12" stroke-width="6"/></svg></div>
          </div>
        </div>
      </div>
    </div>
    <i class="sliver"></i>
    <div class="node">
      <svg class="gear" width="58" height="58" viewBox="0 0 58 58" fill="none" stroke="#999"><circle cx="29" cy="29" r="18" stroke-width="8"/><circle cx="29" cy="29" r="24" stroke-width="9" stroke-dasharray="9 9.850" stroke-dashoffset="4.500"/><circle cx="29" cy="29" r="9.500" stroke-width="3.500"/></svg>
      <p>Pull Docker Image<br>Pull Docker Image (v. 11)</p>
      <div class="nodetools">
        <svg width="28" height="30" viewBox="0 0 28 30" fill="#999" stroke="#000" stroke-width="2"><path d="M8 1h19v20H8z"/><path d="M1 9h19v20H1z"/></svg>
        <svg width="30" height="30" viewBox="0 0 30 30" fill="#999" stroke="#000" stroke-width="2"><path d="M2 28l3-9L22 2l6 6-17 17zM19 5l6 6M5 19l6 6"/></svg>
        <svg width="30" height="30" viewBox="0 0 30 30"><circle cx="15" cy="15" r="14" fill="#000"/><circle cx="15" cy="15" r="11.500" fill="none" stroke="#999" stroke-width="1.800"/><path d="M10.500 10.500l9 9M19.500 10.500l-9 9" stroke="#999" stroke-width="2.500"/></svg>
      </div>
    </div>
    <svg class="minimap" width="280" height="160" viewBox="0 0 280 160">
      <path d="M1 1h278v158H1z" fill="none" stroke="#838383" stroke-width="2"/>
      <path d="M3 2.500h240v136H3z" fill="none" stroke="#60809e" stroke-width="2"/>
      <g fill="#7c7c7c"><path d="M80 5h16v11H80zM70 119h18v10H70z"/></g>
      <g fill="#7b6480"><path d="M44 26h44v9H44zM94 26h34v9H94zM40 45h46v10H40zM94 45h38v10H94zM78 66h18v6H78zM56 81h44v10H56zM54 101h52v10H54z"/></g>
      <g fill="none" stroke="#57515f" stroke-width="2"><path d="M85 17l-19 5-1 4M92 17l18 6v3M65 36l-2 8M111 36l1 8M75 57l5 8M113 56l-22 7-3 3M85 73l5 8M79 92v8M79 112v7"/></g>
      <path d="M51 57l19 3v15l-3 6" fill="none" stroke="#8f6164" stroke-width="2"/>
      <g fill="none" stroke="#999" stroke-width="1.500"><circle cx="48" cy="31" r="2"/><circle cx="98" cy="31" r="2"/><circle cx="44" cy="51" r="2"/><circle cx="98" cy="51" r="2"/><circle cx="62" cy="87" r="2"/><circle cx="58" cy="105" r="2"/></g>
      <path d="M234 130h18v18h-18z" fill="#6d8795"/>
    </svg>
    <div class="modal">
      <svg class="close" width="22" height="22" viewBox="0 0 22 22" stroke="#8595a0" stroke-width="3.800"><path d="M2 2l18 18M20 2L2 20"/></svg>
      <h2>Edit Properties for Pull Docker Image</h2>
      <div class="field"><label>Name <u>*</u></label><div class="inp">Pull Docker Image</div></div>
      <div class="field"><label>Image <u>*</u></label><div class="inp">ankit6133/${p:version.name}</div></div>
      <div class="field"><label>Pull Options</label><div class="inp"></div></div>
      <div class="field"><label>Docker Options</label><div class="inp"></div></div>
      <div class="field tall"><label>Docker Client Variables</label><div class="ed"><div><span>1</span></div></div></div>
      <div class="field"><label>Working Directory</label><div class="inp"></div></div>
      <div class="field tall"><label>Precondition</label><div class="ed"><div><span>1</span></div></div></div>
      <div class="field auto"><label>Post Processing Script</label><div class="inp sel">Step Default<svg width="26" height="13" viewBox="0 0 26 13"><path d="M0 0h26L13 13z" fill="#2961aa"/></svg></div></div>
      <button class="new">New</button>
      <div class="lastbox"></div>
    </div>
  </div>
</main>

<footer class="dock">
  <div class="di"><svg viewBox="0 0 98 98"><rect width="98" height="98" rx="22" fill="url(#gFinder)"/><path d="M54 0h22a22 22 0 0 1 22 22v54a22 22 0 0 1-22 22H61c-3-12-4-26-4-41H42C42 38 46 18 54 0z" fill="url(#gGrey)"/><path d="M26 29v8M72 29v8" stroke="#222" stroke-width="4" stroke-linecap="round"/><path d="M19 66c14 16 46 16 60 0" fill="none" stroke="#16202c" stroke-width="3.500" stroke-linecap="round"/></svg><i></i></div>
  <div class="di"><svg><use href="#outlook"/></svg><i></i></div>
  <div class="di"><svg viewBox="0 0 98 98"><rect width="98" height="98" rx="22" fill="#fff"/><circle cx="50" cy="26" r="10" fill="#7b83eb"/><circle cx="72" cy="29" r="7" fill="#5059c9"/><path d="M66 41h18v18c0 14-14 14-18 6z" fill="#5059c9"/><path d="M32 41h37v22c0 24-34 24-37 0z" fill="#7b83eb"/><rect x="12" y="30" width="38" height="37" rx="4" fill="#444bb0"/><path d="M22 40h17M30.500 40v18" stroke="#fff" stroke-width="4.500"/></svg><b class="badge">59</b><i></i></div>
  <div class="di"><svg viewBox="0 0 98 98"><rect width="98" height="98" rx="22" fill="#102a96"/><g fill="none" stroke="#fff" stroke-width="3.200"><path d="M41 61c-8 0-11-4-11-10V31c0-5 3-8 8-8h22c5 0 8 3 8 8v20c0 6-3 10-11 10M49 43v33M39 67l10 10 10-10"/></g></svg></div>
  <div class="di"><svg viewBox="0 0 98 98"><rect width="98" height="98" rx="22" fill="#fff"/><circle cx="51" cy="49" r="33" fill="#dc6f4d"/><path d="M51 16a33 33 0 0 1 33 33H51z" fill="#f19272"/><path d="M18 49h66a33 33 0 0 1-66 0z" fill="#c4553a"/><rect x="12" y="30" width="38" height="37" rx="4" fill="#b83a1e"/><path d="M25 59V40h7c9 0 9 12 0 12h-7" fill="none" stroke="#fff" stroke-width="4.500"/></svg><i></i></div>
  <div class="di"><svg><use href="#termapp"/></svg><b class="dollar">$</b><i></i></div>
  <hr>
  <div class="di"><svg viewBox="0 0 98 98"><rect width="98" height="98" rx="22" fill="#efeeea"/><path d="M0 25v-3A22 22 0 0 1 22 0h54a22 22 0 0 1 22 22v3z" fill="url(#gYel)"/><path d="M0 26h98" stroke="#9c8a5a" stroke-width="1.500"/><path d="M0 49h98M0 74h98" stroke="#cfcdc9" stroke-width="1.500"/><path d="M3 30h92" stroke="#b5b3ae" stroke-width="2" stroke-dasharray="2 2"/></svg><i></i></div>
  <div class="di"><svg viewBox="0 0 98 98"><rect width="98" height="98" rx="22" fill="#fcfcfc"/><g fill="#61c1ec"><rect x="14" y="33" width="33" height="14" rx="7"/><path d="M47 29h-7a7 7 0 1 1 7-7z"/></g><g fill="#55ae80"><rect x="51" y="15" width="14" height="32" rx="7"/><path d="M69 47v-7a7 7 0 1 1 7 7z"/></g><g fill="#e3b24a"><rect x="51" y="51" width="33" height="14" rx="7"/><path d="M51 69h7a7 7 0 1 1-7 7z"/></g><g fill="#cf3159"><rect x="33" y="51" width="14" height="32" rx="7"/><path d="M29 51v7a7 7 0 1 1-7-7z"/></g></svg><b class="badge">•</b><i></i></div>
  <div class="di"><svg viewBox="0 0 98 98"><rect width="98" height="98" rx="22" fill="#c6dde4"/><rect y="30" width="98" height="68" rx="22" fill="#8a8784"/><rect x="3" y="4" width="92" height="90" rx="19" fill="#000"/><rect x="10" y="11" width="78" height="76" rx="13" fill="#262627"/><path d="M17 19l12 7-12 7M33 37h14" stroke="#fff" stroke-width="3.500" fill="none"/></svg><i></i></div>
  <div class="di"><svg viewBox="0 0 98 98"><rect width="98" height="98" rx="22" fill="#fff"/><path d="M54 12c-20 22-6 50 30 48" fill="none" stroke="#82c455" stroke-width="5"/><g fill="none" stroke="#182b52" stroke-width="4.500"><circle cx="49" cy="49" r="41"/><path d="M9 43c12-22 44-20 56 0 8 14 5 28 0 44"/></g></svg><i></i></div>
  <div class="di"><svg><use href="#wintile"/></svg><i></i></div>
  <div class="di"><svg class="over" viewBox="0 0 98 98"><rect width="98" height="98" rx="22" fill="#ececec"/><path d="M8 22A14 14 0 0 1 22 8h54a14 14 0 0 1 14 14v54a14 14 0 0 1-14 14H22A14 14 0 0 1 8 76z" fill="url(#gSky)"/><path d="M8 53h82v37H22A14 14 0 0 1 8 76z" fill="#24488c"/><path d="M8 64c14-4 24 4 40 2l4 24H22A14 14 0 0 1 8 76z" fill="#c7d3e4"/><path d="M10 82c8-6 16-2 24 6H22c-6 0-10-2-12-6z" fill="#5a4f45"/><path d="M52 68h39l8 30c0 7-56 7-55 0z" fill="#9da1a5"/><path d="M56 72h12l-8 26H48zM80 72h6l7 26h-8z" fill="#e3e4e6"/><ellipse cx="71" cy="93" rx="18" ry="7" fill="#f0f0f0"/><rect x="50" y="48" width="43" height="22" rx="6" fill="#141414"/></svg><i></i></div>
  <div class="di"><svg><use href="#chromeapp"/></svg><i></i></div>
  <div class="di cal"><svg viewBox="0 0 98 98"><rect width="98" height="98" rx="22" fill="#fbfbfa"/><path d="M0 31v-9A22 22 0 0 1 22 0h54a22 22 0 0 1 22 22v9z" fill="url(#gRed)"/></svg><b>MAY</b><em>14</em><i></i></div>
  <div class="di"><svg viewBox="0 0 98 98"><rect width="98" height="98" rx="22" fill="#fff"/><path d="M26 17h55v64H26z" fill="#bf68e0"/><path d="M65 35h16v16H65z" fill="#9a45c5"/><path d="M65 51h16v15H65z" fill="#8531b3"/><path d="M65 66h16v15H65z" fill="#691aa0"/><rect x="9" y="30" width="37" height="37" rx="4" fill="#5f1a99"/><path d="M20 58V40l15 17V39" fill="none" stroke="#fff" stroke-width="4"/></svg><i></i></div>
  <div class="di"><svg viewBox="0 0 98 98"><rect width="98" height="98" rx="22" fill="#fff"/><path d="M64 15v24L22 68l-8-6v-4z" fill="#255fa8"/><path d="M15 36l8-5 42 31v22L15 41z" fill="#3478cb"/><path d="M64 15l19 9v50l-19 9z" fill="#4399e6"/></svg><i></i></div>
  <div class="di big"><svg viewBox="0 0 122 122"><rect width="122" height="122" rx="24" fill="#fff"/><path d="M22 22c16 0 32 4 39 11 7-7 23-11 40-11v78H57V82h21V47H44v53H22z" fill="#d37734"/><path d="M56 58h13v21H56z" fill="#d37734"/></svg><i></i></div>
  <hr>
  <div class="th doc"><svg width="94" height="114" viewBox="0 0 94 114"><path d="M0 23h92v57H0z" fill="#e7efe9"/><path d="M14 2h42l28 36v74H8V12h6z" fill="#f7f7f7"/><path d="M56 2l28 36c-16 0-26 0-27-8z" fill="#d9d9d9"/><g stroke="#a9a9a9" stroke-width="1.500" stroke-dasharray="9 2 14 3 5 2"><path d="M12 17h34M12 23h28M12 29h34M14 35h20M14 42h30M12 48h40M12 54h34M14 60h60M12 66h50M14 72h30M16 79h24M16 85h18M16 91h28M16 97h20M16 103h26"/></g><path d="M38 2l4 8 4-8 4 8" stroke="#333" stroke-width="3" fill="none"/></svg></div>
  <div class="th"><svg width="116" height="104" viewBox="0 0 116 104"><path d="M0 0h114v104H0z" fill="#fafafa"/><path d="M0 0h114v6H0z" fill="#2f72c9"/><path d="M86 14h28v90H86z" fill="#f0efef"/><path d="M2 9h90M4 16h74M4 24h30M4 31h36M4 38h20" stroke="#999" stroke-width="1.500" stroke-dasharray="12 3 7 2"/><path d="M6 36h10" stroke="#2f72c9" stroke-width="3"/><path d="M4 48h20M4 54h60M4 60h30M4 68h20M4 76h38M4 84h28M4 92h36M4 98h20" stroke="#a0a5cc" stroke-width="1.500" stroke-dasharray="14 3 8 2"/><g fill="#7a8a60"><circle cx="90" cy="22" r="2"/><circle cx="90" cy="29" r="2"/><circle cx="90" cy="41" r="2" fill="#d04b9a"/><circle cx="90" cy="48" r="2"/><circle cx="90" cy="59" r="2"/></g><path d="M95 22h14M95 29h12M95 36h14M95 44h12M95 52h14" stroke="#aaa" stroke-width="1.500"/></svg><svg class="mini"><use href="#outlook"/></svg></div>
  <div class="th"><svg width="116" height="72" viewBox="0 0 116 72"><path d="M0 0h114v72H0z" fill="#212123"/><path d="M0 0h22v72H0z" fill="#37383a"/><path d="M1 15h20" stroke="#3d7de0" stroke-width="3"/><path d="M24 11h34v22H24z" fill="#2b1d4b"/><path d="M24 28c8-4 10 0 20-12l14-4v6L46 33H24z" fill="#7b4b9d"/><path d="M46 33c2-8 6-12 12-14v14z" fill="#a3417d"/><path d="M4 8h12M24 4h10M4 21h8" stroke="#777" stroke-width="1.500"/></svg><svg class="mini"><use href="#wintile"/></svg></div>
  <div class="th"><svg width="116" height="80" viewBox="0 0 116 80"><path d="M0 0h114v80H0z" fill="#f4f4f4"/><path d="M0 0h114v5H0z" fill="#2f6fc4"/><path d="M6 7h100" stroke="#8fb3e0" stroke-width="3"/><path d="M22 12h26v40H22z" fill="#f1eac3"/><path d="M56 26h50v52H56z" fill="#e3e3e3"/><path d="M60 36h42v42H60z" fill="#fff"/><path d="M58 27h46v8H58z" fill="#18181a"/><path d="M64 42h30M64 48h24M64 54h34M64 60h20M28 16h18M28 22h16M28 30h18M28 36h14M28 44h18M28 52h14M28 60h18M28 68h14M4 14h14M4 20h12M4 26h10" stroke="#aaa" stroke-width="1.500"/><g fill="#a33"><circle cx="25" cy="17" r="2"/><circle cx="25" cy="24" r="2" fill="#933"/><circle cx="25" cy="37" r="2" fill="#2f6fc4"/><circle cx="25" cy="44" r="2" fill="#486"/><circle cx="25" cy="52" r="2" fill="#b4a"/><circle cx="25" cy="60" r="2" fill="#b4a"/></g></svg><svg class="mini"><use href="#outlook"/></svg></div>
  <div class="th"><svg width="116" height="76" viewBox="0 0 116 76"><path d="M0 0h114v76H0z" fill="#fff"/><path d="M0 0h114v9H0z" fill="#333436"/><path d="M2 2h100" stroke="#8a6a6a" stroke-width="1.500" stroke-dasharray="3 4"/><path d="M54 40a4 4 0 1 0 5 5" stroke="#999" fill="none"/></svg><svg class="mini"><use href="#chromeapp"/></svg></div>
  <div class="th"><svg width="116" height="114" viewBox="0 0 116 114"><path d="M0 0h114v114H0z" fill="#020202"/><path d="M0 0h114v3H0z" fill="#4b4b4b"/><path d="M2 8h14M2 16h30M2 20h24M2 26h36M2 30h28M2 34h22M2 38h40M2 42h44M2 46h98M2 51h36M2 55h40M2 110h44" stroke="#777" stroke-width="1.200" stroke-dasharray="5 1 9 2"/></svg><svg class="mini"><use href="#termapp"/></svg></div>
  <div class="th bin"><svg width="88" height="114" viewBox="0 0 88 114"><path d="M4 22L12 8l12-6 8 8 10-8 12 8 8-6 12 8 10 12c-18 12-66 12-80-2z" fill="#dcdcdc"/><path d="M22 4l12 14-16-2zM50 6l8 18 8-12zM66 10l6 10 6-8z" fill="#3a4350"/><path d="M30 12l8 3-4 5z" fill="#4ab6e0"/><path d="M52 14l6 8-8-2z" fill="#c96a4a"/><path d="M1 14c8 16 78 16 86 0L76 106c-6 8-58 8-63 0z" fill="url(#gBin)"/><path d="M5 20c4 8 74 8 79 0l-1-6c-10 8-68 8-78 0z" fill="#cfd1d3" opacity=".5"/><path d="M24 30l4 72M62 30l-4 72" stroke="#c2c5c8" stroke-width="2" opacity=".5"/></svg></div>
</footer>
</body>
</html>
```
FILE: styles.css
```css
*{box-sizing:border-box}
html,body{margin:0;padding:0}
body{position:relative;width:3456px;height:2234px;overflow:hidden;font-family:Inter,"Liberation Sans",sans-serif;background:radial-gradient(circle at 0 2090px,#4a3216 0,transparent 130px),radial-gradient(circle at 3410px 2150px,#3b4318 0,transparent 150px),linear-gradient(90deg,#101418 0,#0b1218 40%,#0d1013 80%,#15170e 100%)}
svg{display:block;flex:none}
.defs{position:absolute}
i,em{font-style:normal}
.vsep{width:3px;height:32px;background:#5a5a5a;align-self:center}

/* system menu bar */
.menubar{height:74px;display:grid;align-items:center;padding-left:38px;color:#fff;font-size:26px;letter-spacing:-.4px;white-space:nowrap;background:linear-gradient(90deg,#21519a 0,#27538f 38%,#2f4f75 60%,#3a4555 78%,#45433e 100%);grid-template-columns:71px 142px 83px 88px 100px 128px 176px 133px 84px 138px 839px 76px 75px 73px 70px 50px 42px 152px 71px 87px 69px 65px 89px 74px 56px 36px 37px 168px 120px}
.menubar span,.menubar b{line-height:74px;margin-top:-1px}
.menubar b{letter-spacing:-.7px}
.menubar small{display:inline-block;width:4px}
.apple{width:32px;height:32px;margin-top:-6px}
.statusdot{width:10px;height:10px;border-radius:50%;background:#6a66ea}

/* chat window behind, at the right */
.win-slack{position:absolute;left:3000px;top:76px;width:456px;height:1992px;background:#b9b9bc;border-radius:0 24px 20px 0;border-top:2px solid #d5d5d7;overflow:hidden;padding-right:8px}
.slack-top{height:78px;display:flex;justify-content:flex-end;padding:12px 8px 0 0}
.slack-body{height:1904px;background:#fff;border-radius:0 16px 16px 0;display:flex;flex-direction:column;align-items:stretch}
.slack-bar{height:174px;border-bottom:3px solid #d9d9d9;display:flex;justify-content:flex-end;align-items:flex-start;padding:32px 39px 0 0}
.slack-bar svg:nth-of-type(1){margin-right:39px}
.slack-bar svg:nth-of-type(2){margin-top:4px}
.pillend{width:40px;height:56px;border:2px solid #ccc;border-radius:16px;margin:-11px 39px 0 0}
.newline{margin-top:1036px;display:flex;align-items:center;justify-content:flex-end;height:40px;padding-right:37px;gap:9px;color:#cc2f55}
.newline i{width:200px;height:2px;background:#d8899d}
.newline b{font:700 27px Lato,sans-serif}
.composer{margin:448px 40px 0 0;height:159px;border:2px solid #ddd;border-radius:16px;display:flex;justify-content:flex-end;align-items:flex-end;padding:0 32px 25px 0}
.composer i{width:2px;height:40px;background:#ddd;margin:0 20px 0 15px;margin-bottom:-6px}
.composer svg:last-child{margin-bottom:8px}

/* editor window behind */
.win-code{position:absolute;left:0;top:96px;width:3279px;height:1973px;background:linear-gradient(#2a2a2a 0,#262626 245px,#000 305px,#08090a 100%);border-radius:0 24px 22px 22px;box-shadow:20px 10px 70px rgba(0,0,0,.55);border-bottom:2px solid #2b2c2d;display:flex;align-items:flex-end;overflow:hidden}
.code-accent{position:absolute;right:0;top:246px;width:9px;height:58px;background:#a87d2a}
.status{display:flex;align-items:center;width:620px;height:38px;background:#111;color:#77797a;font-size:25px;gap:8px;overflow:hidden}
.remote{width:68px;height:38px;background:#24549d;display:flex;justify-content:center;align-items:center;margin-right:9px}
.status span:not(.remote){width:16px;margin-right:2px}
.tower{margin-left:24px}

/* browser window */
.win-chrome{position:absolute;left:0;top:76px;width:3268px;height:1967px;border-radius:22px 22px 20px 22px;overflow:hidden;background:#1f2120;box-shadow:0 0 0 1px #000}
.tabstrip{height:80px;display:flex;align-items:flex-start;border-top:2px solid #6f7070}
.pill{width:104px;height:41px;margin:19px 35px 0 42px;border-radius:21px;background:#5e5adb;display:flex;align-items:center;justify-content:center;padding-left:4px}
.tabs-a,.tabs-b{display:flex;height:78px}
.tabs-a .tab{width:159.5px;padding-left:19px}
.tabs-b .tab{width:158px;padding-left:20px}
.tab{display:flex;align-items:center;height:76px}
.tab svg,.tab-active svg{width:32px;height:32px}
.tab span{margin-left:16px;width:70px;white-space:nowrap;font-size:24px;letter-spacing:-.6px;color:#c8c9c9;-webkit-mask-image:linear-gradient(90deg,#000 55%,transparent 98%);mask-image:linear-gradient(90deg,#000 55%,transparent 98%)}
.tab::after{content:"";width:3px;height:32px;background:#4a4c4b;margin-left:auto}
.tab.last::after{background:none}
.fav-d{width:32px;height:32px;border-radius:7px;background:#3b3e4c;color:#fff;font-size:25px;line-height:32px;text-align:center}
.fav-s{width:32px;height:32px;border-radius:5px;background:#fff;border:4px solid #f3c93c;border-right-color:#6fa7e8;border-bottom-color:#e8853a;color:#444;font-size:15px;line-height:20px;padding-left:3px}
.tab-active{width:146px;height:68px;margin:10px 8px 0 3px;background:#3c3c3c;border-radius:18px 18px 0 0;display:flex;align-items:center;padding:0 0 12px 16px;color:#e6e6e6;font-size:24px;position:relative}
.tab-active span{margin:0 auto 0 16px}
.tab-active .tx{width:16px;height:16px;margin-right:24px}
.tab-active::before,.tab-active::after{content:"";position:absolute;bottom:0;width:20px;height:20px}
.tab-active::before{left:-20px;background:radial-gradient(circle at 0 0,transparent 19.500px,#3c3c3c 20px)}
.tab-active::after{right:-20px;background:radial-gradient(circle at 100% 0,transparent 19.500px,#3c3c3c 20px)}
.plus{margin:27px 0 0 21px}
.tabdrop{margin:10px 0 0 124px;width:58px;height:56px;border-radius:18px;background:#3c3c3c;display:flex;align-items:center;justify-content:center}
.toolbar{height:92px;background:#3c3c3c;border-radius:16px 16px 0 0;display:grid;align-items:center;padding-left:31px;grid-template-columns:72px 72px 65px 2716px 73px 67px 39px 86px 40px}
.omnibox{width:2680px;height:68px;border-radius:34px;background:#282828;display:flex;align-items:center;padding:0 33px 0 10px}
.site{width:48px;height:48px;border-radius:50%;background:#3c3c3c;display:flex;align-items:center;justify-content:center;margin-right:16px}
.url{font-size:28px;color:#e6e6e6;letter-spacing:.02px;margin-right:auto;white-space:nowrap}
.url em{color:#c3c3c3}
.bookmarks{height:70px;padding:0 0 14px 37px;background:#3c3c3c;border-bottom:2px solid #4a4a4a;display:grid;align-items:center;font-size:24px;letter-spacing:-.3px;color:#c7c7c7;white-space:nowrap;grid-template-columns:60px 30px 46px 263px 45px 189px 44px 265px 43px 265px 44px 263px 44px 268px 48px 163px 42px 263px 44px 474px 56px 34px 49px 190px}
.bookmarks>*{position:relative;top:1px}

/* application */
.app{height:1725px;background:#999;font-family:Roboto,"Liberation Sans",sans-serif;font-size:28px;color:#121c24}
.apphead{height:120px;background:#1a3c66;display:grid;align-items:center;padding-left:34px;grid-template-columns:65px 135px 2661px 99px 70px 200px}
.apphead h1{margin:0;font-weight:400;font-size:44px;color:#999;white-space:nowrap}
.user{color:#999;font-size:29px;letter-spacing:.6px;white-space:nowrap}
.appbody{display:flex;height:1605px}
.side{width:276px;background:#171717;display:flex;flex-direction:column;gap:10px;flex:none}
.side a{height:80px;display:flex;align-items:center;padding-left:35px;color:#a3a3a3}
.side a.on{background:#2e2d33;border-left:8px solid #1a3c66;padding-left:27px}
.side a svg{width:30px;height:30px;fill:none;stroke:#999;stroke-width:2.500;margin-right:24px}
.side a span{padding-top:10px;white-space:nowrap}
.sidefoot{margin-top:auto;height:81px;background:#1a3c66;display:flex;align-items:center;justify-content:flex-end;padding:0 28px 8px 0}
.content{flex:1;display:flex;flex-direction:column;min-width:0}
.crumbs{height:81px;line-height:83px;padding-left:43px;display:grid;grid-template-columns:191px 45px 317px 43px 162px 20px;color:#1a3c66;white-space:nowrap}
.crumbs i{color:#222}
.subtabs{height:101px;border-bottom:2px solid #7b7b7b;padding-left:43px;display:flex;gap:96px}
.subtabs b{height:99px;line-height:97px}
.subtabs b.on{color:#1a3c66;border-bottom:4px solid #1a3c66}
.work{flex:1;display:flex;min-height:0}
.palette{width:595px;flex:none;border-right:2px solid #7d7d7d;padding-right:2px;height:1423px;overflow:hidden;display:flex;flex-direction:column}
.filter{height:72px;display:flex;padding-top:4px;flex:none}
.filter>svg{margin:14px 0 0 19px}
.fbox{width:528px;height:64px;border:2px solid #868a8d;display:flex;align-items:center;padding:0 7px 0 21px;color:#363f46}
.fbox em{font-style:italic;margin:2px auto 0 0}
.fbox svg{margin-top:8px}
.cat{height:60px;line-height:60px;background:#373d43;color:#999;padding-left:12px;flex:none}
.palette ul{list-style:none;margin:2px 0 0;padding:0}
.palette li{height:48px;display:flex;align-items:center;padding-left:20px;white-space:nowrap}
.palette li svg{width:32px;height:32px;margin-right:18px}
.cats{display:flex;flex-direction:column;gap:2px}
.canvas{flex:1;margin-left:9px;border-left:2px solid #7d7d7d}
.ctools{height:67px;border-bottom:2px solid #7d7d7d;display:flex;padding:8px 0 0 9px}
.ctools button{width:95px;height:45px;margin-top:2px;border:0;border-radius:6px;background:#1f4f64;color:#999;font:28px/41px Roboto,sans-serif;padding:0 0 3px}
.ctools i{width:2px;height:50px;background:#7d7d7d;margin:0 27px 0 26px}

/* diagram canvas items */
.sliver{position:absolute;left:2186px;top:1029px;width:4px;height:123px;border-radius:0 4px 4px 0;background:#1f4d86}
.node{position:absolute;left:2709px;top:1567px;width:518px;height:158px;border:6px solid #265a9a;border-radius:10px;background:#461446;box-shadow:inset 0 0 0 5px #999;display:flex;align-items:flex-start;padding:33px 0 0 18px;color:#999}
.node p{margin:8px 0 0 31px;line-height:34px}
.nodetools{position:absolute;left:394px;top:0;display:flex;gap:10px}
.minimap{position:absolute;left:2948px;top:1766px}

/* dialog */
.modal{position:absolute;left:1080px;top:290px;width:1108px;height:1628px;overflow:hidden;background:#fff;border-top:10px solid #2961aa;padding:91px 0 0 96px;color:#172430;box-shadow:0 24px 70px rgba(0,0,0,.22)}
.close{position:absolute;left:1055px;top:31px}
.modal h2{margin:0;height:64px;line-height:64px;font-weight:400;font-size:56px;color:#5a6872;white-space:nowrap;margin-bottom:52px}
.field{height:161.500px}
.field.tall{height:168px}
.field.auto{height:auto}
.field label{display:block;line-height:38px;height:36px;margin-bottom:13px}
.field u{text-decoration:none;color:#e62f23;margin-left:-1px}
.inp{width:800px;height:64px;border:2px solid #dfe1e4;line-height:62px;padding-left:20px}
.inp.sel{width:804px;height:65px;color:#000;letter-spacing:1px;display:flex;justify-content:space-between;align-items:center;padding-right:19px;line-height:60px}
.ed{width:800px;height:70px;border:2px solid #c8c8c8;border-bottom-width:3px;border-radius:6px;overflow:hidden}
.ed div{width:74px;height:66px;background:#ebebeb}
.ed span{display:block;height:16px;line-height:16px;background:#dadada;font-family:"DejaVu Sans Mono",monospace;font-size:13px;text-align:right;padding-right:26px;color:#333}
.new{display:block;margin-top:15px;width:106px;height:64px;border:4px solid #2961aa;background:#fff;color:#2961aa;font:700 27px/54px Roboto,sans-serif;padding:0;letter-spacing:.8px}
.lastbox{margin-top:56px;width:800px;height:60px;border:2px solid #dcdde2;background:#f4f5fa}

/* dock */
.dock{position:absolute;left:113px;top:2072px;width:3231px;height:152px;border-radius:46px;border:2px solid #454c50;background:linear-gradient(90deg,#1d2a31 0,#1b222b 18%,#1b2226 38%,#1a242f 50%,#1b1f22 64%,#1a2733 75%,#242a28 85%,#33361e 100%);display:flex;align-items:flex-start;padding:19px 0 0 19px}
.di{width:98px;height:122px;margin-right:31.200px;position:relative;flex:none;display:flex;flex-direction:column;align-items:center;justify-content:space-between}
.di>svg{width:98px;height:98px;overflow:visible}
.di>i{width:8px;height:8px;border-radius:50%;background:#a6acb2;margin-bottom:-5px}
.dock hr{width:2px;height:112px;border:0;background:#5c646a;margin:-1px 43px 0 14px;flex:none}
.badge{position:absolute;right:-17px;top:-11px;width:48px;height:48px;border-radius:50%;background:#dc4a3d;color:#fff;font-weight:400;font-size:25px;line-height:48px;text-align:center}
.dollar{position:absolute;left:16px;top:12px;color:#5fd44a;font:400 23px/30px "DejaVu Sans Mono",monospace}
.cal b{position:absolute;top:3px;color:#fff;font-weight:600;font-size:19px;line-height:28px}
.cal em{position:absolute;top:32px;font-weight:300;font-size:60px;line-height:60px;letter-spacing:-2px;color:#2a2a2a}
.di.big{width:122px;height:133px;margin:-11px 19px 0 -11px}
.di.big>svg{width:122px;height:122px}
.th{position:relative;width:116px;height:114px;display:flex;align-items:center;margin:-6px 13.500px 0 0;flex:none}
.th.doc{width:94px;margin-right:24px}
.th.bin{margin-left:13px}
.mini{position:absolute;right:2px;bottom:0;width:37px;height:37px}
```
